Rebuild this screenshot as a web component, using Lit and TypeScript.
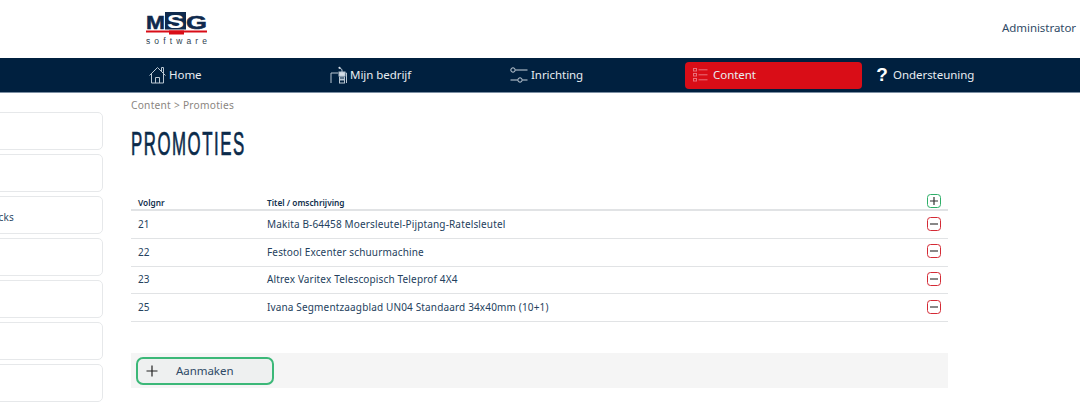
import { LitElement, html, css, svg } from "lit";
import { customElement } from "lit/decorators.js";

const rows = [
  ["21", "Makita B-64458 Moersleutel-Pijptang-Ratelsleutel"],
  ["22", "Festool Excenter schuurmachine"],
  ["23", "Altrex Varitex Telescopisch Teleprof 4X4"],
  ["25", "Ivana Segmentzaagblad UN04 Standaard 34x40mm (10+1)"],
];

const homeIcon = svg`<svg class="ni" width="17" height="18" viewBox="0 0 17 18" fill="none" stroke="#b9c6d2" stroke-width="1"><path d="M.5 9.500 8.500 1.500l8 8M2.500 8v9h12V8M6.500 17v-5.500h4V17M12.500 5V1.500h2V7"/></svg>`;
const bizIcon = svg`<svg class="ni" width="17" height="18" viewBox="0 0 17 18" fill="none" stroke="#b9c6d2" stroke-width="1"><path d="M1 17V7h7M15.500 7h1M16.500 7v10"/><rect x="9" y="6" width="6" height="4" fill="#d5dde5"/><rect x="9.500" y="11" width="5" height="6"/><path d="M10 13.500h4" stroke-width="2"/><path d="M12 6V3.500L9.500 2"/><circle cx="9.500" cy="1.800" r="1.100" fill="#d5dde5" stroke="none"/></svg>`;
const slidersIcon = svg`<svg class="ni" width="18" height="16" viewBox="0 0 18 16" fill="none" stroke="#c9d3dd" stroke-width="1"><circle cx="3" cy="3" r="2.200"/><path d="M5.500 3H17.500M.5 13h7M12.500 13h5"/><circle cx="10" cy="13" r="2.200"/></svg>`;
const listIcon = svg`<svg class="ni" width="15" height="14" viewBox="0 0 15 14" fill="none" stroke="#e9707a" stroke-width="1"><rect x=".5" y=".5" width="3" height="2.500"/><rect x=".5" y="5.500" width="3" height="2.500"/><rect x=".5" y="10.500" width="3" height="2.500"/><path d="M5.500 1.800H14.500M5.500 6.800H14.500M5.500 11.800H14.500"/></svg>`;

@customElement("app-root")
export class AppRoot extends LitElement {
  static styles = css`
    :host { display: block; width: 1080px; height: 404px; overflow: hidden; background: #fff; font-family: "Noto Sans", "Open Sans", sans-serif; color: #1c3a57; }
    .top { height: 58px; display: flex; justify-content: space-between; padding-left: 146px; box-sizing: border-box; }
    .logo { margin-top: 12px; display: block; }
    .user { font-size: 11.500px; padding-top: 20px; color: #2f4a66; letter-spacing: -.05px; white-space: nowrap; margin-right: 4px; }
    nav { height: 35px; background: #00203f; border-bottom: 1px solid #7c8fa3; box-sizing: border-box; display: grid; grid-template-columns: 181px 180px 175px 177px 1fr; padding-left: 149px; color: #e8edf2; font-size: 11.500px; letter-spacing: -.05px; }
    nav .item { display: flex; align-items: center; gap: 3px; white-space: nowrap; padding-bottom: 1px; box-sizing: border-box; }
    nav .item.active { background: #d90d17; border-radius: 4px; height: 27px; margin-top: 4px; padding: 0 0 2px 8px; gap: 5px; }
    nav .help { padding-left: 14px; }
    .q { font-size: 19px; font-weight: 700; color: #fff; width: 12px; text-align: center; margin-right: 2px; font-family: "Liberation Sans", sans-serif; }
    .body { display: flex; }
    aside { width: 103px; flex: none; padding-top: 19px; display: flex; flex-direction: column; gap: 4px; overflow: hidden; }
    .card { height: 38px; margin-left: -18px; border: 1px solid #e6e8ea; border-radius: 5px; box-sizing: border-box; display: flex; align-items: center; font-size: 10px; letter-spacing: .15px; padding-top: 3px; color: #2f4a66; }
    main { margin-left: 28px; width: 817px; }
    .crumb { font-size: 10.200px; color: #8a8580; padding-top: 6px; line-height: 13px; letter-spacing: .25px; }
    h1 { margin: 13px 0 0; font: 400 33px/38px "Liberation Sans", sans-serif; letter-spacing: 3px; color: #0a2a4a; display: inline-block; white-space: nowrap; transform: scaleX(.51); transform-origin: left center; -webkit-text-stroke: .7px #0a2a4a; }
    table { width: 100%; border-collapse: collapse; margin-top: 28px; table-layout: fixed; }
    th { font-size: 8.300px; font-weight: 600; text-align: left; height: 18px; padding: 0 0 0 7px; border-bottom: 2px solid #e1e3e5; color: #12304d; vertical-align: bottom; line-height: 12px; }
    td { font-size: 10px; padding: 0 0 1px 7px; height: 25.800px; border-bottom: 1px solid #e1e3e5; color: #24415d; letter-spacing: .15px; }
    .act { text-align: right; padding: 0; }
    td.act { height: 26.800px; }
    .act span { display: inline-flex; vertical-align: middle; width: 14px; height: 14px; border: 1.500px solid; border-radius: 3.500px; box-sizing: border-box; margin-right: 7px; align-items: center; justify-content: center; }
    th.act span { margin-bottom: 1px; }
    .act .plus { border-color: #2eaf68; }
    .act .min { border-color: #d42a35; margin-bottom: 2px; }
    .bar { margin-top: 31px; height: 35px; background: #f5f5f5; display: flex; align-items: center; padding-left: 5px; }
    .btn { width: 138px; height: 28px; box-sizing: border-box; border: 2px solid #3cb878; border-radius: 7px; background: #eef0f0; display: flex; align-items: center; padding-left: 8px; gap: 18px; font-size: 11.500px; color: #2f4a66; letter-spacing: -.05px; }
  `;

  render() {
    const plus = svg`<svg width="8" height="8" viewBox="0 0 8 8" stroke="#333" stroke-width="1.200"><path d="M4 0v8M0 4h8"/></svg>`;
    const minus = svg`<svg width="8" height="8" viewBox="0 0 8 8" stroke="#555" stroke-width="1.400"><path d="M0 4h8"/></svg>`;
    return html`
      <div class="top">
        <svg class="logo" width="62" height="34" viewBox="0 0 62 34">
          <rect x="19" y="0" width="21" height="17.500" fill="#0f2a4d"/>
          <text x="0" y="17" font-family="Liberation Sans" font-weight="700" font-size="19" textLength="19" lengthAdjust="spacingAndGlyphs" fill="#0f2a4d" stroke="#0f2a4d" stroke-width=".5">M</text>
          <text x="21" y="16" font-family="Liberation Sans" font-weight="700" font-size="19" textLength="17" lengthAdjust="spacingAndGlyphs" fill="#fff">S</text>
          <text x="40" y="17" font-family="Liberation Sans" font-weight="700" font-size="19" textLength="21" lengthAdjust="spacingAndGlyphs" fill="#0f2a4d" stroke="#0f2a4d" stroke-width=".5">G</text>
          <rect x="0" y="18.500" width="61" height="2" fill="#d90d17"/>
          <rect x="23" y="18.500" width="15" height="4" fill="#d90d17"/>
          <text x="0" y="32" font-family="Liberation Sans" font-size="8.500" textLength="61" fill="#2f3f50">software</text>
        </svg>
        <div class="user">Administrator</div>
      </div>
      <nav>
        <div class="item">${homeIcon} Home</div>
        <div class="item">${bizIcon} Mijn bedrijf</div>
        <div class="item">${slidersIcon} Inrichting</div>
        <div class="item active">${listIcon} Content</div>
        <div class="item help"><span class="q">?</span>Ondersteuning</div>
      </nav>
      <div class="body">
        <aside>
          <div class="card"></div><div class="card"></div>
          <div class="card">Blocks</div>
          <div class="card"></div><div class="card"></div><div class="card"></div><div class="card"></div>
        </aside>
        <main>
          <div class="crumb">Content &gt; Promoties</div>
          <h1>PROMOTIES</h1>
          <table>
            <colgroup><col style="width:129px" /><col /><col style="width:30px" /></colgroup>
            <thead><tr><th>Volgnr</th><th>Titel / omschrijving</th><th class="act"><span class="plus">${plus}</span></th></tr></thead>
            <tbody>
              ${rows.map((r) => html`<tr><td>${r[0]}</td><td>${r[1]}</td><td class="act"><span class="min">${minus}</span></td></tr>`)}
            </tbody>
          </table>
          <div class="bar"><div class="btn"><svg width="12" height="12" viewBox="0 0 12 12" stroke="#222" stroke-width="1.200"><path d="M6 .5v11M.5 6h11"/></svg><span>Aanmaken</span></div></div>
        </main>
      </div>
    `;
  }
}
